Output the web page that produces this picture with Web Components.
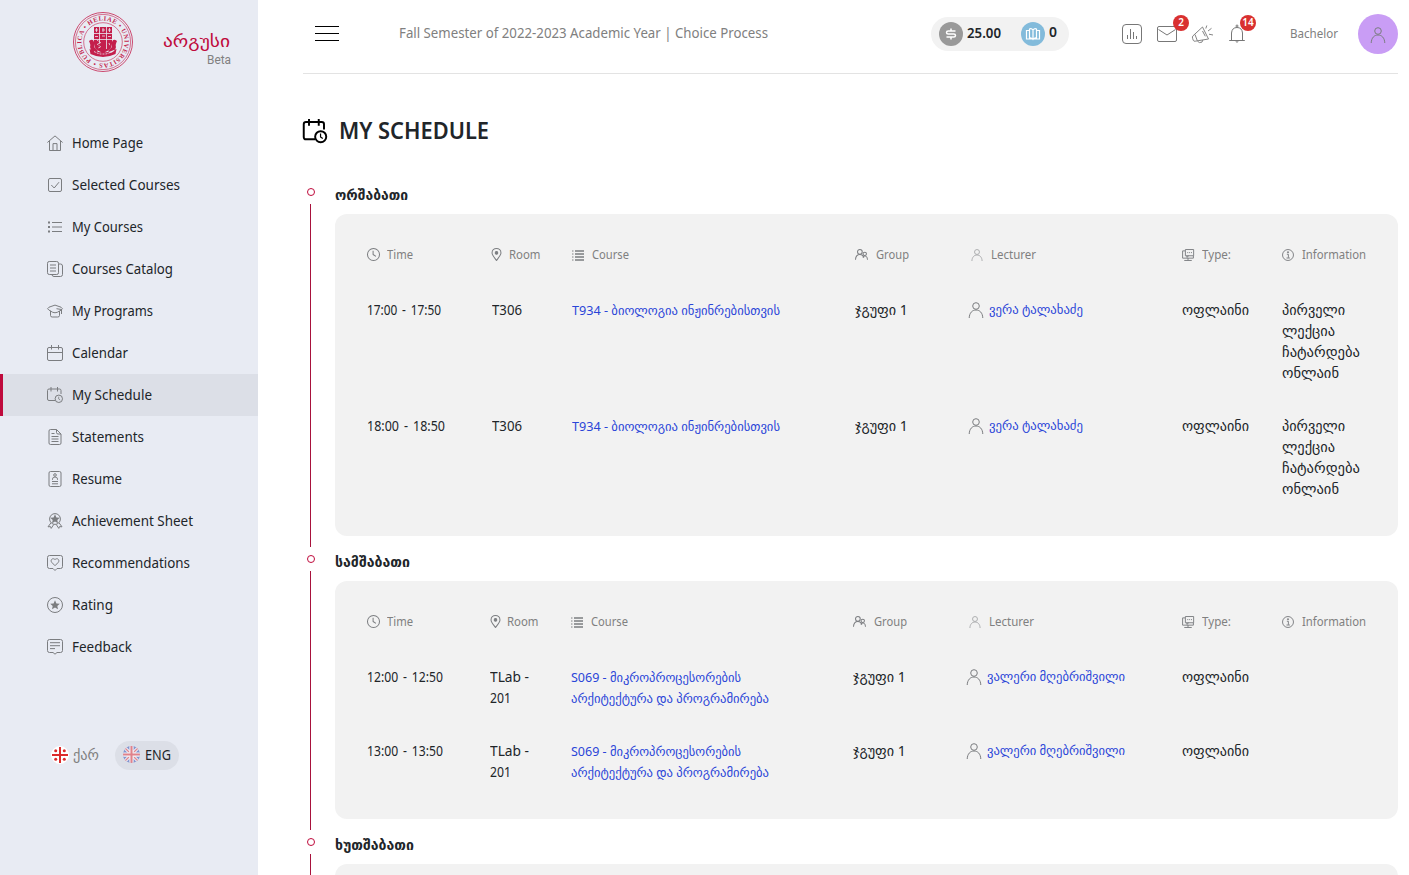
<!DOCTYPE html>
<html lang="en">
<head>
<meta charset="utf-8">
<title>My Schedule</title>
<style>
html,body{margin:0;height:100%}
body{font-family:"Noto Sans","DejaVu Sans",sans-serif;font-size:14px;line-height:21px;color:#212529;background:#fff;overflow:hidden}
</style>
</head>
<body>
<argus-app></argus-app>
<script>
const define = (name, css, html, ready) => customElements.define(name, class extends HTMLElement {
  connectedCallback() {
    if (this.shadowRoot) return;
    const root = this.attachShadow({mode: 'open'});
    root.innerHTML = `<style>*{box-sizing:border-box}${css}</style>` + (typeof html === 'function' ? html(this) : html);
    if (ready) ready(this, root);
  }
});

/* Icons: drawn on a 16 unit grid */
const person = '<circle cx="8" cy="4" r="3.300"/><path d="M1.200 16C1.400 10.900 4.200 8 8 8s6.600 2.900 6.800 8"/>';
const star = 'M8 3.300l1.400 3.100 3.400.3-2.500 2.300.7 3.300L8 10.600l-3 1.700.7-3.300-2.500-2.300 3.400-.3z';
const ICONS = {
  home: '<path d="M.4 7.500L8 .9l7.600 6.600M2.500 6v9.500h11V6M6 15.500V8.600h4v6.900"/>',
  check: '<rect x="1.500" y="1.500" width="13" height="13" rx="1.500"/><path d="M4.300 8l2.900 3L12 5.200"/>',
  list: '<path d="M5 3.500h10M5 8h10M5 12.500h10"/><path d="M1 3.500h2M1 8h2M1 12.500h2" stroke-width="1.800"/>',
  catalog: '<rect x=".5" y=".5" width="11" height="13" rx="1.800"/><path d="M3 4h6M3 7h6M3 10h6M11.500 3h2q2 0 2 2v8.500q0 2-2 2H7q-2 0-2-2"/>',
  cap: '<path d="M8 2.100L2 4.200Q-.8 5.700 2 7.200l1.500.6v4.700q0 1.500 1.700 1.500h5.600q1.700 0 1.700-1.500V8M3.500 8q4.500 3.500 9 0l1.500-.8Q16.800 5.700 14 4.200L8 2.100M9.500 5.700l5 .8V11"/>',
  calendar: '<rect x=".5" y="2.500" width="15" height="13" rx="1.500"/><path d="M.5 7.500h15M4.500 0v4.500M11.500 0v4.500"/>',
  schedule: '<path d="M8 13.500H2Q.5 13.500.5 12V3.500Q.5 2 2 2h10.500Q14 2 14 3.500V7M4 0v4.500M10.500 0v4.500"/><circle cx="11.800" cy="11.800" r="3.700"/><path d="M11.700 9.700v2.300l1.500 1" stroke-width=".8"/>',
  doc: '<path d="M9.500.5H3.500q-1.500 0-1.500 1.500v12q0 1.500 1.500 1.500h9q1.500 0 1.500-1.500V5zM9.500.5v3q0 1.500 1.500 1.500h3M4.500 4.500h3M4.500 7.500h7M4.500 10h7M4.500 12.500h7"/>',
  resume: '<rect x="2" y=".5" width="12" height="15" rx="1.500"/><circle cx="8" cy="4" r="1.300"/><path d="M5.500 8.800V8q0-2 2.500-2t2.500 2v.8M5 10.500h6M5 12.800h6"/>',
  award: `<circle cx="8" cy="6" r="5.400"/><path fill="currentColor" stroke="none" transform="translate(0 -2)" d="${star}"/><path d="M4 9.800l-3 4 2.500-.2.700 1.800 2.600-4M12 9.800l3 4-2.500-.2-.7 1.800-2.600-4"/>`,
  heart: '<path d="M2.500.5h11q2 0 2 2v9q0 2-2 2H10l-2 2-2-2H2.500q-2 0-2-2v-9q0-2 2-2z"/><path d="M8 10.700L4.700 7.300C2.800 5 6 2.200 8 4.700c2-2.500 5.200.3 3.300 2.600z"/>',
  rating: `<circle cx="8" cy="8" r="7.500"/><path fill="currentColor" stroke="none" d="${star}"/>`,
  feedback: '<path d="M2.500.5h11q2 0 2 2v9q0 2-2 2H10l-2 1.700-2-1.700H2.500q-2 0-2-2v-9q0-2 2-2zM3 3.700h10M3 6.700h10M3 9.600h5"/>',
  person,
  clock: '<circle cx="8" cy="8" r="7.400"/><path d="M7.500 3.500V8l3.500 2.300"/>',
  pin: '<path d="M8 15.400C5.500 12 2.500 8.800 2.500 6a5.500 5.500 0 0 1 11 0c0 2.800-3 6-5.500 9.400z"/><circle cx="8" cy="6" r="1.600" fill="currentColor"/>',
  lines: '<path d="M4 2.700H16M4 6.700H16M4 10.700H16M4 14.700H16" stroke-width="1.900"/><path d="M0 2.700h2M0 6.700h2M0 10.700h2M0 14.700h2" stroke-width="1.300"/>',
  group: '<circle cx="6" cy="4.700" r="2.900"/><path d="M.6 14.500C.8 10.400 3 8 6 8s4.300 1.600 4.800 4"/><circle cx="12" cy="7.200" r="2.100"/><path d="M9.500 11.500c2-3 5.800-2 5.900 3"/>',
  type: '<path d="M4 2.500H.8v9.700h14.400V9M3 15.300h10M8 12v3"/><rect x="4.500" y=".7" width="11" height="8.300"/><path d="M6.500 9v2.200L9 9M7 4.800h1.300M9.500 4.800h1.300M12 4.800h1.300"/>',
  info: '<circle cx="8" cy="8" r="7.300"/><path d="M6.500 7h2v4.700M6 12h4.500"/><circle cx="8" cy="4.300" r=".8" fill="currentColor"/>'
};
define('argus-icon', ':host{display:block;width:16px;height:16px;flex:none;color:#7b7d80}svg{display:block;width:100%;height:100%;overflow:visible}',
  h => `<svg viewBox="0 0 16 16" fill="none" stroke="currentColor" stroke-width="${h.getAttribute('weight') || 1}" stroke-linejoin="round">${ICONS[h.getAttribute('name')]}</svg>`);

/* One line of text set to a fixed measure */
define('fit-text', ':host{display:block;white-space:nowrap;flex:none}span{display:inline-block;transform-origin:0 50%}', '<span><slot></slot></span>',
  (h, root) => {
    const s = root.querySelector('span'), w = +h.getAttribute('w');
    h.style.width = w + 'px';
    s.style.transform = `scaleX(${w / s.getBoundingClientRect().width})`;
  });

define('argus-seal', ':host{display:block;width:60px;height:60px;color:#c41f4c}svg{display:block;overflow:visible}text{font:bold 6.500px "Liberation Serif",serif;fill:currentColor}',
  `<svg width="60" height="60" viewBox="0 0 60 60" fill="none" stroke="currentColor">
  <circle cx="30" cy="30" r="29.500" stroke-width=".8"/><circle cx="30" cy="30" r="27.600" stroke-width=".6"/><circle cx="30" cy="30" r="19.300" stroke-width=".6"/>
  <path id="ring" stroke="none" d="M18.500 48.200A21.500 21.500 0 1 1 41.500 48.200A21.500 21.500 0 0 1 18.500 48.200"/>
  <text stroke="none"><textPath href="#ring" textLength="131" lengthAdjust="spacing">PUBLICA • HELIAE • UNIVERSITAS •</textPath></text>
  <path stroke="none" fill="currentColor" d="M21 15h18v17q0 6-9 9-9-3-9-9zM16 29q4-3 5 1v5l4 4-2 2q-5-1-6-6 1-2-1-6zM44 29q-4-3-5 1v5l-4 4 2 2q5-1 6-6-1-2 1-6zM16.500 37q13.500 7 27 0l-1 5q-12.500 6-25 0z"/>
  <g stroke="#e8ebf3" stroke-width=".8"><path d="M21 21.500h18M21 27.500h18M26.500 15v16M33.500 15v22M22 18h3M29 18h3M35 18h3M22 24.500h3M29 24h3M35 24.500h3M23.500 16v4M30 16v4M36.500 16v4"/><path d="M24 28l4 3-4 1 4 3-3 1M36 31l1 3M21 39.500l3 1.500 3 1h6l3-1 3-1.500" stroke-dasharray="2 1"/></g></svg>`);

define('nav-item', `:host{display:flex;align-items:center;height:42px;padding-left:47px;gap:9px}
:host([active]){background:#dcdfe7;border-left:3px solid #bf0a3c;padding-left:44px}fit-text{font-size:14.500px;margin-top:-2px}`,
  h => `<argus-icon name="${h.getAttribute('icon')}"></argus-icon><fit-text w="${h.getAttribute('w')}">${h.getAttribute('label')}</fit-text>`);

const NAV = [['home','Home Page',71],['check','Selected Courses',108],['list','My Courses',71],['catalog','Courses Catalog',101],['cap','My Programs',81],['calendar','Calendar',56],['schedule','My Schedule',80],['doc','Statements',72],['resume','Resume',50],['award','Achievement Sheet',121],['heart','Recommendations',118],['rating','Rating',41],['feedback','Feedback',60]];
define('lang-switch', `:host{display:flex;align-items:center;gap:13px;margin:73px 0 0 48px}
div{display:flex;align-items:center;height:29px;border-radius:15px;gap:4px;padding:0 3px 2px 3px;color:#808080}
.on{background:#dcdfe7;color:#212529;gap:5px;padding:0 8px 2px}svg{display:block}`,
  `<div><svg width="18" height="18" viewBox="0 0 18 18"><circle cx="9" cy="9" r="9" fill="#fff"/><path d="M9 1v16M1 9h16" stroke="#dc2b2b" stroke-width="2"/><g fill="#dc2b2b"><circle cx="4.700" cy="4.700" r="1.500"/><circle cx="13.300" cy="4.700" r="1.500"/><circle cx="4.700" cy="13.300" r="1.500"/><circle cx="13.300" cy="13.300" r="1.500"/></g></svg><fit-text w="26">ქარ</fit-text></div>
  <div class="on"><svg width="17" height="17" viewBox="0 0 18 18"><clipPath id="c"><circle cx="9" cy="9" r="9"/></clipPath><g clip-path="url(#c)"><path fill="#8193cf" d="M0 0h18v18H0z"/><path d="M1 1l16 16M17 1L1 17" stroke="#f1f0f5" stroke-width="3.500"/><path d="M1 1l16 16M17 1L1 17" stroke="#df8791" stroke-width="1.300"/><path d="M9 0v18M0 9h18" stroke="#f5f3f6" stroke-width="4.500"/><path d="M9 0v18M0 9h18" stroke="#e0828b" stroke-width="2.200"/></g></svg><fit-text w="26">ENG</fit-text></div>`);
define('argus-sidebar', `:host{display:block;width:258px;flex:none;background:#e8ebf3}
header{display:flex;height:122px;padding:12px 0 0 73px;gap:30px}
.brand{padding-top:18px;display:flex;flex-direction:column;align-items:flex-end}
.name{color:#bf0a3c;font-size:17px}.beta{color:#808080;font:12.500px/16px Roboto,sans-serif;margin:1px -1px 0 0}`,
  `<header><argus-seal></argus-seal><div class="brand"><fit-text class="name" w="67">არგუსი</fit-text><fit-text class="beta" w="24">Beta</fit-text></div></header>
  <nav>${NAV.map(([i, t, w]) => `<nav-item icon="${i}" label="${t}" w="${w}"${i === 'schedule' ? ' active' : ''}></nav-item>`).join('')}</nav><lang-switch></lang-switch>`);

define('count-badge', ':host{position:absolute;display:flex;align-items:center;justify-content:center;width:16px;height:16px;border-radius:50%;background:#d93030;color:#fff;font-size:10px;font-weight:600;line-height:14px;padding-bottom:2px;box-sizing:border-box}', '<slot></slot>');
define('tool-bar', `:host{display:flex;align-items:center;gap:15px}
.i{position:relative;width:20px;height:20px}svg{display:block;overflow:visible}count-badge{left:16px;top:-9px}.i:last-child count-badge{left:13px}`,
  `<div class="i"><svg width="20" height="20" fill="none" stroke="#777"><rect x=".5" y=".5" width="19" height="19" rx="3.500"/><path d="M5.500 15v-4M8.500 15V5M11.500 15V8M14.500 15v-3"/></svg></div>
  <div class="i"><svg width="20" height="20" fill="none" stroke="#777"><rect x=".5" y="2.500" width="19" height="15" rx="1.500"/><path d="M1.500 5.500L10 11l8.500-5.500"/></svg><count-badge>2</count-badge></div>
  <div class="i"><svg width="21" height="20" fill="none" stroke="#777" stroke-width=".9" stroke-linejoin="round"><path d="M10.500 3L1 11.800q-1 1-.4 2.500l.6 1.900q.5 1.300 2 1L16.500 15zM3 10.500l2.300 6.200M5.500 17.200q1.500 2.300 4.500.9l.8-2M10.500 7l2.800 5.300"/><path d="M13.800 4.500l1-3M16 7l3.500-2.700M17 10.200l4 .8"/></svg></div>
  <div class="i"><svg width="20" height="20" fill="none" stroke="#777"><path d="M2.200 16.500h15.600M4.500 16V9q.5-5.500 5.500-5.500T15.500 9v7M8.500 17q1.500 2.700 3 0"/><circle cx="10" cy="2" r="1"/></svg><count-badge>14</count-badge></div>`);
define('balance-pill', `:host{display:flex;align-items:center;width:138px;height:34px;border-radius:17px;background:#f2f2f2;padding-left:8px;font-weight:600;font-size:13.500px;box-sizing:border-box}
i{display:block;width:24px;height:24px;border-radius:50%;background:#999;margin-right:4px}i.b{background:#83bbdb;margin-left:20px}svg{display:block}`,
  `<i><svg width="24" height="24" fill="none" stroke="#fff" stroke-width="1.500"><path d="M16.500 9H9.200q-1.700 0-1.700 1.500T9.200 12h5.600q1.700 0 1.700 1.500T14.800 15H7.500M12 6.500V9M12 15v2.500"/></svg></i><fit-text w="34">25.00</fit-text>
  <i class="b"><svg width="24" height="24" fill="none" stroke="#fff" stroke-width="1.200"><path d="M12 8v9.500M12 8Q10.500 6 8.500 7v9q2-.5 3.500 1.500 1.500-2 3.500-1.500V7Q13.500 6 12 8zM8.500 8.500h-3v8.500h13V8.500h-3"/></svg></i><fit-text w="8" style="margin-top:-2px">0</fit-text>`);
define('top-bar', `:host{display:flex;align-items:center;height:74px;border-bottom:1px solid #e3e3e3;padding:0 0 6px 12px;box-sizing:border-box}
.menu{width:24px;height:15px;border:solid #000;border-width:1px 0;display:flex;align-items:center}.menu:before{content:"";height:1px;flex:1;background:#000}
.term{margin-left:60px;margin-right:auto;margin-top:-2px;color:#808080}.role{font-size:12.500px;color:#808080;margin:0 20px 0 43px}
.avatar{width:40px;height:40px;border-radius:50%;background:#c99df5;display:flex;align-items:center;justify-content:center;padding-top:2px}balance-pill{margin-right:53px}`,
  `<div class="menu"></div><fit-text class="term" w="369">Fall Semester of 2022-2023 Academic Year | Choice Process</fit-text><balance-pill></balance-pill><tool-bar></tool-bar><fit-text class="role" w="48">Bachelor</fit-text><div class="avatar"><argus-icon name="person"></argus-icon></div>`);

const HEADS = [['clock','Time',26,20,0,13],['pin','Room',31.500,17,-1.500,13],['lines','Course',37,20.500,0,12],['group','Group',33,21,0,13],['person','Lecturer',45,23,3,12],['type','Type:',29,20,0,12],['info','Information',64,20,0,12]];
define('schedule-head', ':host{display:contents}div{display:flex;align-items:center;height:21px;margin:30px 0 19px}fit-text{font-size:12.500px;color:#808080}',
  () => HEADS.map(([i, t, w, offset, m, s]) => `<div><argus-icon name="${i}" weight="1.250" style="width:${s}px;height:${s}px;margin-left:${m}px;margin-right:${offset - s - m}px${i === 'person' ? ';opacity:.6' : ''}"></argus-icon><fit-text w="${w}">${t}</fit-text></div>`).join(''));
define('lecturer-link', ':host{display:flex;align-items:center;gap:5px;height:21px;color:#2a45d8;font-size:12.500px}argus-icon{margin-top:-1px}fit-text{margin-top:-3px}',
  h => `<argus-icon name="person"></argus-icon><fit-text w="${h.getAttribute('w')}">${h.textContent}</fit-text>`);

const lines = a => a.map(([t, w]) => `<fit-text w="${w}">${t}</fit-text>`).join('');
const DAYS = [
  {name:'ორშაბათი', w:73, cols:'125px 80px 283px 113.800px 213.600px 99.600px 1fr', rows:['17:00 - 17:50|74','18:00 - 18:50|78'].map(t => ({time:[t.split('|')], room:[['T306',30]], course:[['T934 - ბიოლოგია ინჟინრებისთვის',208]], who:['ვერა ტალახაძე',94], info:[['პირველი',63],['ლექცია',53],['ჩატარდება',78],['ონლაინ',57]]}))},
  {name:'სამშაბათი', w:75, cols:'123.500px 80.500px 282px 113px 216.400px 99.600px 1fr', rows:['12:00 - 12:50|76','13:00 - 13:50|76'].map(t => ({time:[t.split('|')], room:[['TLab -',39],['201',21]], course:[['S069 - მიკროპროცესორების',170],['არქიტექტურა და პროგრამირება',198]], who:['ვალერი მღებრიშვილი',138], info:[]}))},
  {name:'ხუთშაბათი', w:79, cols:'1fr', rows:[]}
];
define('schedule-day', `:host{display:flex}
.rail{width:16px;margin-right:16px;display:flex;flex-direction:column;align-items:center}.dot{width:8px;height:8px;border:1px solid #bf0a3c;border-radius:50%;margin:8px 0}
.line{width:1px;flex:1;background:#a8123c;align-self:flex-start;margin-left:7px}.body{flex:1}
.title{font-weight:700;font-size:13.500px;line-height:22px;padding-top:4px;height:34px;margin-left:-.5px}
.card{display:grid;align-items:start;background:#f2f2f2;border-radius:12px;padding:0 0 20px 31.600px;margin-bottom:11px;min-height:120px}
.cell{padding:16px 0;min-height:53px}.cell:not(.link) > fit-text{margin-top:-1px;margin-bottom:1px}.time{word-spacing:2px}.link{color:#2a45d8;font-size:12.500px}`,
  h => { const d = DAYS[h.getAttribute('index')];
    return `<div class="rail"><div class="dot"></div><div class="line"></div></div><div class="body"><fit-text class="title" w="${d.w}">${d.name}</fit-text>
    <div class="card" style="grid-template-columns:${d.cols}">${d.rows.length ? '<schedule-head></schedule-head>' : ''}${d.rows.map(r => `<div class="cell time">${lines(r.time)}</div><div class="cell">${lines(r.room)}</div><div class="cell link">${lines(r.course)}</div><div class="cell">${lines([['ჯგუფი 1',53]])}</div><div class="cell"><lecturer-link w="${r.who[1]}">${r.who[0]}</lecturer-link></div><div class="cell">${lines([['ოფლაინი',67]])}</div><div class="cell">${lines(r.info)}</div>`).join('')}</div></div>`; });

define('argus-app', `:host{display:flex;height:100vh;overflow:hidden}
main{flex:1;padding:0 11px 0 45px;min-width:0}
.heading{display:flex;align-items:center;gap:12px;height:106px;padding-top:8px}.heading argus-icon{width:24px;height:24px;color:#000}.heading fit-text{font-size:22.500px;font-weight:600;line-height:30px}`,
  `<argus-sidebar></argus-sidebar><main><top-bar></top-bar><div class="heading"><argus-icon name="schedule" weight="1.300"></argus-icon><fit-text w="150">MY SCHEDULE</fit-text></div>${DAYS.map((d, i) => `<schedule-day index="${i}"></schedule-day>`).join('')}</main>`);
</script>
</body>
</html>
